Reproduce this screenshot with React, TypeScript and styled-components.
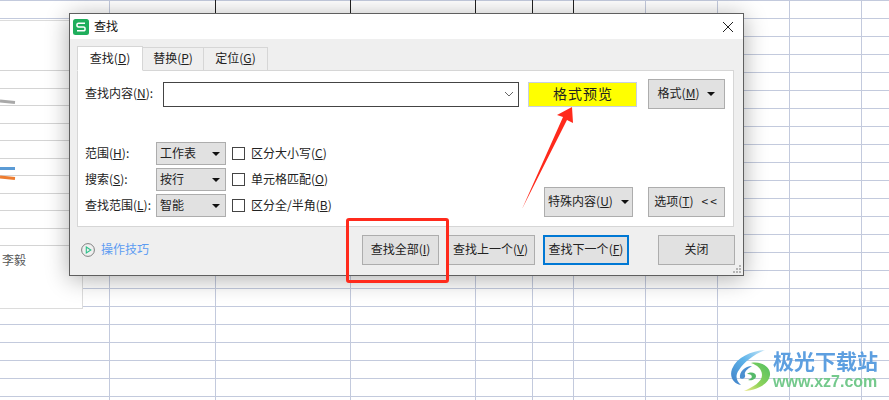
import React from "react";
import styled, { createGlobalStyle } from "styled-components";

const GlobalStyle = createGlobalStyle`
  html, body {
    margin: 0;
    padding: 0;
    background: #fff;
  }
  body {
    font-family: "Noto Sans CJK SC", "Liberation Sans", sans-serif;
    font-size: 12px;
    color: #222;
  }
`;

const Page = styled.div`
  position: relative;
  width: 889px;
  height: 400px;
  overflow: hidden;
`;

const Sheet = styled.div`
  display: flex;
  height: 100%;
  background-color: #fff;
  background-image: linear-gradient(#fff 17px, #c3cadd 17px);
  background-size: 100% 18px;
  background-position: 0 1px;
`;

const Column = styled.div<{ $width: number; $dark?: boolean }>`
  box-sizing: border-box;
  flex: none;
  width: ${(p) => p.$width}px;
  border-right: 1px solid #c3cadd;
  ${(p) =>
    p.$dark &&
    "border-image: linear-gradient(#222 14px, #c3cadd 14px) 1;"}
`;

const ChartFrame = styled.div`
  position: absolute;
  left: 0;
  top: 20px;
  box-sizing: border-box;
  width: 83px;
  height: 289px;
  background: #fff;
  border-top: 1px solid #dcdcdc;
  border-right: 1px solid #dcdcdc;
  border-bottom: 1px solid #dcdcdc;
`;

const ChartLabel = styled.span`
  position: absolute;
  left: 2px;
  top: 230px;
  font-size: 12px;
  color: #555;
`;

const Dialog = styled.div`
  position: absolute;
  left: 69px;
  top: 13px;
  box-sizing: border-box;
  width: 675px;
  height: 263px;
  display: flex;
  flex-direction: column;
  background: #efefef;
  border: 1px solid #5f5f5f;
  box-shadow: 0 3px 22px rgba(0, 0, 0, 0.32);
`;

const TitleBar = styled.div`
  flex: none;
  height: 25px;
  display: flex;
  align-items: center;
  gap: 5px;
  padding: 0 10px 0 3px;
  background: #fff;
`;

const TitleText = styled.span`
  flex: 1;
  padding-bottom: 2px;
  font-size: 12px;
  color: #111;
`;

const Caption = styled.span`
  display: inline-block;
  padding-bottom: 3px;
`;

const TabStrip = styled.div`
  flex: none;
  display: flex;
  align-items: flex-end;
  height: 25px;
  margin: 7px 0 -1px 7px;
`;

const Tab = styled.div<{ $active?: boolean; $width: number }>`
  position: relative;
  z-index: ${(p) => (p.$active ? 1 : 0)};
  box-sizing: border-box;
  width: ${(p) => p.$width}px;
  height: ${(p) => (p.$active ? 25 : 24)}px;
  display: flex;
  align-items: center;
  justify-content: center;
  background: ${(p) => (p.$active ? "#fff" : "#efefef")};
  border: 1px solid #d6d6d6;
  border-left-width: ${(p) => (p.$active ? 1 : 0)}px;
  border-bottom-color: ${(p) => (p.$active ? "#fff" : "#d6d6d6")};
`;

const Panel = styled.div`
  flex: none;
  box-sizing: border-box;
  height: 157px;
  margin: 0 9px 0 7px;
  padding: 8px 8px 9px 7px;
  display: flex;
  flex-direction: column;
  justify-content: space-between;
  background: #fff;
  border: 1px solid #d6d6d6;
`;

const SearchRow = styled.div`
  display: flex;
  align-items: center;
  height: 30px;
`;

const FieldLabel = styled.label<{ $width: number }>`
  flex: none;
  width: ${(p) => p.$width}px;
  white-space: nowrap;
`;

const SearchBox = styled.div`
  box-sizing: border-box;
  width: 356px;
  height: 25px;
  display: flex;
  align-items: center;
  justify-content: flex-end;
  padding-right: 4px;
  background: #fff;
  border: 1px solid #444;
`;

const Preview = styled.div`
  box-sizing: border-box;
  width: 109px;
  height: 25px;
  margin: 0 11px 0 9px;
  padding: 0 0 3px 1px;
  display: flex;
  align-items: center;
  justify-content: center;
  font-size: 14px;
  letter-spacing: 1px;
  color: #222;
  background: #ffff00;
  border: 1px solid #c8d0e0;
`;

const Button = styled.button<{ $width: number; $height?: number; $primary?: boolean }>`
  flex: none;
  box-sizing: border-box;
  width: ${(p) => p.$width}px;
  height: ${(p) => p.$height ?? 30}px;
  padding: 0;
  display: flex;
  align-items: center;
  justify-content: center;
  gap: 8px;
  font: inherit;
  color: #222;
  white-space: nowrap;
  background: #e1e1e1;
  border: ${(p) => (p.$primary ? "2px solid #0078d4" : "1px solid #adadad")};
`;

const Caret = styled.span`
  flex: none;
  width: 0;
  height: 0;
  border-left: 4px solid transparent;
  border-right: 4px solid transparent;
  border-top: 4px solid #111;
`;

const Arrows = styled.span`
  padding-bottom: 3px;
  letter-spacing: 2px;
`;

const LowerArea = styled.div`
  display: flex;
  align-items: flex-end;
  justify-content: space-between;
`;

const OptionGrid = styled.div`
  display: grid;
  grid-auto-rows: 23px;
  row-gap: 3px;
`;

const OptionRow = styled.div`
  display: flex;
  align-items: center;
`;

const Select = styled.div`
  box-sizing: border-box;
  width: 70px;
  height: 23px;
  padding: 0 5px 0 3px;
  display: flex;
  align-items: center;
  justify-content: space-between;
  background: #e1e1e1;
  border: 1px solid #adadad;
`;

const CheckBox = styled.span`
  box-sizing: border-box;
  flex: none;
  width: 13px;
  height: 13px;
  margin: 0 6px;
  background: #fff;
  border: 1px solid #444;
`;

const SideButtons = styled.div`
  display: flex;
  gap: 15px;
`;

const Footer = styled.div`
  flex: 1;
  display: flex;
  align-items: center;
  padding: 0 8px 3px 11px;
`;

const HelpLink = styled.a`
  display: flex;
  align-items: center;
  gap: 6px;
  margin-right: auto;
  color: #5c9cf2;
`;

const FooterGap = styled.span<{ $width: number }>`
  flex: none;
  width: ${(p) => p.$width}px;
`;

const Grip = styled.svg`
  position: absolute;
  right: 1px;
  bottom: 1px;
`;

const Annotation = styled.svg`
  position: absolute;
  left: 0;
  top: 0;
  pointer-events: none;
`;

const RedFrame = styled.div`
  position: absolute;
  left: 346px;
  top: 218px;
  box-sizing: border-box;
  width: 103px;
  height: 65px;
  border: 3px solid #ff2a1c;
  border-radius: 3px;
`;

const Watermark = styled.div`
  position: absolute;
  left: 725px;
  top: 345px;
  display: flex;
  align-items: flex-start;
  filter: blur(0.4px);
`;

const WatermarkText = styled.div`
  display: flex;
  flex-direction: column;
  margin: 3px 0 0 -2px;
  line-height: 1;
`;

const BrandName = styled.span`
  font-size: 21px;
  font-weight: 700;
  line-height: 25px;
  color: #5d9fe0;
`;

const BrandUrl = styled.span`
  margin-top: 1px;
  font-family: "Liberation Sans", sans-serif;
  font-size: 16px;
  font-weight: 700;
  color: #74c98c;
`;

const columns = [
  { width: 110 },
  { width: 106, dark: true },
  { width: 135, dark: true },
  { width: 125, dark: true },
  { width: 57, dark: true },
  { width: 41, dark: true },
  { width: 72 },
  { width: 72 },
  { width: 72 },
  { width: 72 },
];

const chartLines = [49, 67, 84, 102, 119, 137, 154, 172, 189, 207, 224];

const options = [
  { label: "范围", key: "H", value: "工作表", check: "区分大小写", checkKey: "C" },
  { label: "搜索", key: "S", value: "按行", check: "单元格匹配", checkKey: "O" },
  { label: "查找范围", key: "L", value: "智能", check: "区分全/半角", checkKey: "B" },
];

const Keyed = ({ text, k }: { text: string; k: string }) => (
  <Caption>
    {text}(<u>{k}</u>)
  </Caption>
);

const App = () => {
  return (
    <Page>
      <GlobalStyle />
      <Sheet>
        {columns.map((col, i) => (
          <Column key={i} $width={col.width} $dark={col.dark} />
        ))}
      </Sheet>

      <ChartFrame>
        <svg width="82" height="287">
          {chartLines.map((y) => (
            <rect key={y} x="0" y={y} width="82" height="1" fill="#d4d4d4" />
          ))}
          <path d="M0 80 L15 81.5" stroke="#a9a9a9" strokeWidth="3" />
          <path d="M0 147.5 L15 147.5" stroke="#5b9bd5" strokeWidth="3" />
          <path d="M0 156 L15 157.5" stroke="#ed7d31" strokeWidth="3" />
        </svg>
        <ChartLabel>李毅</ChartLabel>
      </ChartFrame>

      <Dialog>
        <TitleBar>
          <svg width="16" height="16" viewBox="0 0 16 16">
            <rect width="16" height="16" rx="2.5" fill="#1fae5c" />
            <path
              d="M12 4.2 H5.5 C3.4 4.2 3.4 8 5.5 8 H10.5 C12.6 8 12.6 11.8 10.5 11.8 H4"
              fill="none"
              stroke="#fff"
              strokeWidth="1.5"
            />
          </svg>
          <TitleText>查找</TitleText>
          <svg width="10" height="10" viewBox="0 0 10 10">
            <path d="M0 0 L10 10 M10 0 L0 10" stroke="#222" strokeWidth="1" />
          </svg>
        </TitleBar>

        <TabStrip>
          <Tab $active $width={66}>
            <Keyed text="查找" k="D" />
          </Tab>
          <Tab $width={61}>
            <Keyed text="替换" k="P" />
          </Tab>
          <Tab $width={64}>
            <Keyed text="定位" k="G" />
          </Tab>
        </TabStrip>

        <Panel>
          <SearchRow>
            <FieldLabel $width={78}>
              <Keyed text="查找内容" k="N" />:
            </FieldLabel>
            <SearchBox>
              <svg width="10" height="6" viewBox="0 0 10 6">
                <path d="M1 1 L5 5 L9 1" fill="none" stroke="#666" strokeWidth="1" />
              </svg>
            </SearchBox>
            <Preview>格式预览</Preview>
            <Button $width={77}>
              <Keyed text="格式" k="M" />
              <Caret />
            </Button>
          </SearchRow>

          <LowerArea>
            <OptionGrid>
              {options.map((o) => (
                <OptionRow key={o.key}>
                  <FieldLabel $width={71}>
                    <Keyed text={o.label} k={o.key} />:
                  </FieldLabel>
                  <Select>
                    <Caption>{o.value}</Caption>
                    <Caret />
                  </Select>
                  <CheckBox />
                  <Keyed text={o.check} k={o.checkKey} />
                </OptionRow>
              ))}
            </OptionGrid>
            <SideButtons>
              <Button $width={89}>
                <Keyed text="特殊内容" k="U" />
                <Caret />
              </Button>
              <Button $width={77}>
                <Keyed text="选项" k="T" />
                <Arrows>{"<<"}</Arrows>
              </Button>
            </SideButtons>
          </LowerArea>
        </Panel>

        <Footer>
          <HelpLink>
            <svg width="14" height="14" viewBox="0 0 14 14">
              <circle cx="7" cy="7" r="6.4" fill="none" stroke="#7f7f7f" strokeWidth="1" />
              <path d="M5.3 4 L9.8 7 L5.3 10 Z" fill="none" stroke="#2fc08a" strokeWidth="1.1" />
            </svg>
            <Caption>操作技巧</Caption>
          </HelpLink>
          <Button $width={77}>
            <Keyed text="查找全部" k="I" />
          </Button>
          <FooterGap $width={7} />
          <Button $width={89}>
            <Keyed text="查找上一个" k="V" />
          </Button>
          <FooterGap $width={8} />
          <Button $width={86} $primary>
            <Keyed text="查找下一个" k="F" />
          </Button>
          <FooterGap $width={29} />
          <Button $width={77}>
            <Caption>关闭</Caption>
          </Button>
        </Footer>

        <Grip width="10" height="10" viewBox="0 0 10 10">
          <rect x="7" y="1" width="2" height="2" fill="#b4b4b4" />
          <rect x="4" y="4" width="2" height="2" fill="#b4b4b4" />
          <rect x="7" y="4" width="2" height="2" fill="#b4b4b4" />
          <rect x="1" y="7" width="2" height="2" fill="#b4b4b4" />
          <rect x="4" y="7" width="2" height="2" fill="#b4b4b4" />
          <rect x="7" y="7" width="2" height="2" fill="#b4b4b4" />
        </Grip>
      </Dialog>

      <RedFrame />
      <Annotation width="889" height="400">
        <polygon
          points="572,107 573,123 567,120 522,209 563,117 557,115"
          fill="#ff2a1c"
        />
      </Annotation>

      <Watermark>
        <svg width="50" height="50" viewBox="0 0 50 50">
          <defs>
            <linearGradient id="wmBlue" x1="1" y1="0" x2="0" y2="1">
              <stop offset="0" stopColor="#c5e6f7" />
              <stop offset="0.45" stopColor="#5fb4ea" />
              <stop offset="1" stopColor="#3f7fc6" />
            </linearGradient>
            <linearGradient id="wmGreen" x1="1" y1="0" x2="0" y2="1">
              <stop offset="0" stopColor="#4fbf63" />
              <stop offset="0.6" stopColor="#8fd35a" />
              <stop offset="1" stopColor="#f1ea8a" />
            </linearGradient>
          </defs>
          <path d="M40 5 C26 6 12 12 7 24 C4 32 9 39 16 40 C11 36 10 30 14 25 C19 17 28 10 40 5Z" fill="url(#wmBlue)" />
          <path d="M15 33 C14 27 20 21 27 21 C22 24 19 27 20 30 C21 33 17 35 15 33Z" fill="#4a8fd0" />
          <path d="M26 18 C36 16 46 22 45 30 C44 39 32 45 19 46 C28 42 37 37 37 30 C37 24 32 20 26 18Z" fill="url(#wmGreen)" />
          <path d="M22 29 C26 26 31 28 31 31 C31 34 27 36 23 35 C26 34 28 32 26 30 C25 29 23 29 22 29Z" fill="#55b96a" />
        </svg>
        <WatermarkText>
          <BrandName>极光下载站</BrandName>
          <BrandUrl>www.xz7.com</BrandUrl>
        </WatermarkText>
      </Watermark>
    </Page>
  );
};

export default App;
